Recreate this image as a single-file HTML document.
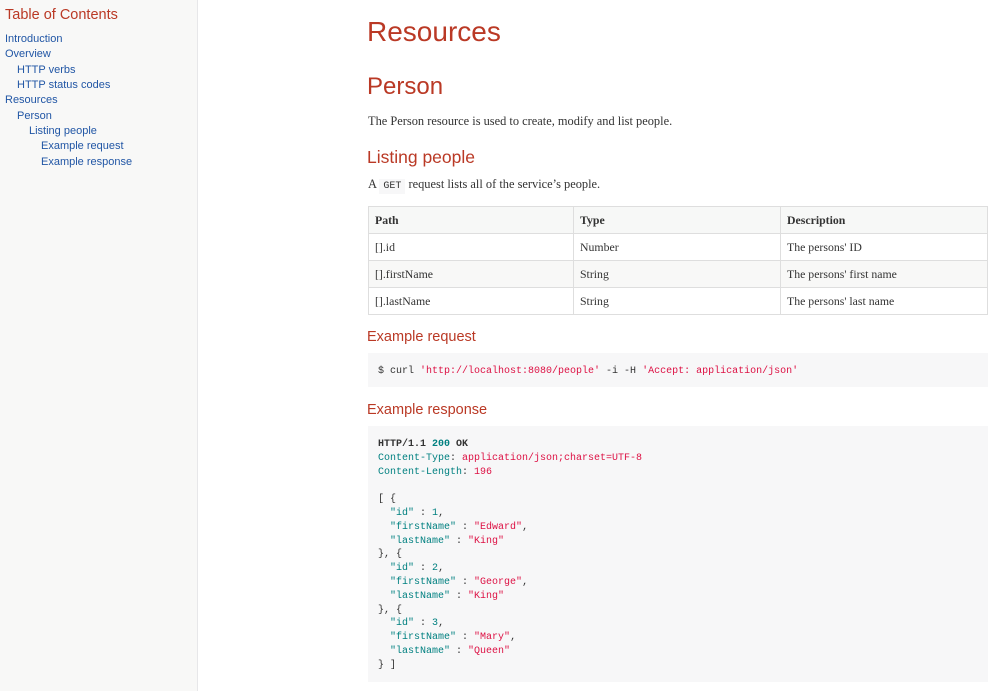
<!DOCTYPE html>
<html><head><meta charset="utf-8"><style>
*{margin:0;padding:0;box-sizing:border-box}
body{width:1000px;height:691px;overflow:hidden;background:#fff;position:relative;font-family:"Liberation Serif",serif;color:#333}
#toc{position:absolute;left:0;top:0;width:198px;height:691px;background:#f8f8f7;border-right:1px solid #e7e7e9}
#toc h2{position:absolute;left:5px;top:7px;font:normal 14.5px "Liberation Sans",sans-serif;color:#ba3925}
#toc a{position:absolute;font:11px "Liberation Sans",sans-serif;color:#2156a5;text-decoration:none;white-space:nowrap}
.h{position:absolute;font-family:"Liberation Sans",sans-serif;color:#ba3925;font-weight:normal;white-space:nowrap}
.p{position:absolute;left:368px;font-size:12.4px;color:#333}
code{font-family:"Liberation Mono",monospace;font-size:10px;background:#f7f7f8;padding:2px 4px;color:#333}
table{position:absolute;left:368px;top:206px;width:620px;border-collapse:collapse;font-size:11.8px}
td,th{border:1px solid #dedede;height:27px;padding:0 6px;text-align:left;vertical-align:middle}
th{background:#f7f8f7;font-weight:bold}
tr:nth-child(3) td{background:#f8f8f7}
.pre{position:absolute;left:368px;width:620px;background:#f7f7f8;font-family:"Liberation Mono",monospace;font-size:10px;line-height:13.8px;padding:0 10px;white-space:pre;color:#333}
.r{color:#dd1144}.t{color:#008080}.b{font-weight:bold}
</style></head><body>
<div id="toc"><h2>Table of Contents</h2>
<a style="left:5px;top:33px">Introduction</a>
<a style="left:5px;top:48px">Overview</a>
<a style="left:17px;top:64px">HTTP verbs</a>
<a style="left:17px;top:79px">HTTP status codes</a>
<a style="left:5px;top:94px">Resources</a>
<a style="left:17px;top:110px">Person</a>
<a style="left:29px;top:125px">Listing people</a>
<a style="left:41px;top:140px">Example request</a>
<a style="left:41px;top:156px">Example response</a>
</div>
<div class="h" style="left:367px;top:16px;font-size:28px">Resources</div>
<div class="h" style="left:367px;top:73px;font-size:24px">Person</div>
<div class="p" style="top:114px">The Person resource is used to create, modify and list people.</div>
<div class="h" style="left:367px;top:147px;font-size:17.5px">Listing people</div>
<div class="p" style="top:177px">A <code>GET</code> request lists all of the service’s people.</div>
<table>
<tr><th style="width:205px">Path</th><th style="width:207px">Type</th><th>Description</th></tr>
<tr><td>[].id</td><td>Number</td><td>The persons' ID</td></tr>
<tr><td>[].firstName</td><td>String</td><td>The persons' first name</td></tr>
<tr><td>[].lastName</td><td>String</td><td>The persons' last name</td></tr>
</table>
<div class="h" style="left:367px;top:329px;font-size:14.5px">Example request</div>
<div class="pre" style="top:353px;height:34px;padding-top:12px">$ curl <span class="r">'http://localhost:8080/people'</span> -i -H <span class="r">'Accept: application/json'</span></div>
<div class="h" style="left:367px;top:402px;font-size:14.5px">Example response</div>
<div class="pre" style="top:426px;height:256px;padding-top:12px"><span class="b">HTTP/1.1 <span class="t">200</span> OK</span>
<span class="t">Content-Type</span>: <span class="r">application/json;charset=UTF-8</span>
<span class="t">Content-Length</span>: <span class="r">196</span>

[ {
  <span class="t">"id"</span> : <span class="t">1</span>,
  <span class="t">"firstName"</span> : <span class="r">"Edward"</span>,
  <span class="t">"lastName"</span> : <span class="r">"King"</span>
}, {
  <span class="t">"id"</span> : <span class="t">2</span>,
  <span class="t">"firstName"</span> : <span class="r">"George"</span>,
  <span class="t">"lastName"</span> : <span class="r">"King"</span>
}, {
  <span class="t">"id"</span> : <span class="t">3</span>,
  <span class="t">"firstName"</span> : <span class="r">"Mary"</span>,
  <span class="t">"lastName"</span> : <span class="r">"Queen"</span>
} ]</div>
</body></html>
